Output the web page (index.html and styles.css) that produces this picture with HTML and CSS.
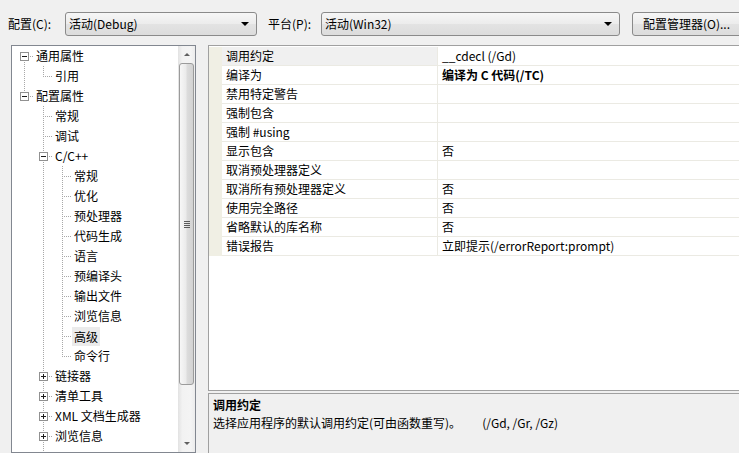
FILE: index.html
```html
<!DOCTYPE html>
<html lang="zh-CN">
<head>
<meta charset="utf-8">
<title>属性页</title>
<link rel="stylesheet" href="styles.css">
</head>
<body>
<div class="top">
  <span class="lbl lbl-cfg">配置(C):</span>
  <div class="combo combo-cfg"><span class="combo-text">活动(Debug)</span><span class="arrow"></span></div>
  <span class="lbl lbl-plat">平台(P):</span>
  <div class="combo combo-plat"><span class="combo-text">活动(Win32)</span><span class="arrow"></span></div>
  <div class="btn">配置管理器(O)...</div>
</div>
<div class="main">
  <div class="tree">
    <div class="tree-list">
      <div class="trow"><span class="col x-dn"><span class="box minus"></span></span><span class="tx">通用属性</span></div>
      <div class="trow"><span class="col v"></span><span class="col l"></span><span class="tx">引用</span></div>
      <div class="trow"><span class="col x-up"><span class="box minus"></span></span><span class="tx">配置属性</span></div>
      <div class="trow"><span class="col"></span><span class="col t"></span><span class="tx">常规</span></div>
      <div class="trow"><span class="col"></span><span class="col t"></span><span class="tx">调试</span></div>
      <div class="trow"><span class="col"></span><span class="col x-ud"><span class="box minus"></span></span><span class="tx">C/C++</span></div>
      <div class="trow"><span class="col"></span><span class="col v"></span><span class="col t"></span><span class="tx">常规</span></div>
      <div class="trow"><span class="col"></span><span class="col v"></span><span class="col t"></span><span class="tx">优化</span></div>
      <div class="trow"><span class="col"></span><span class="col v"></span><span class="col t"></span><span class="tx">预处理器</span></div>
      <div class="trow"><span class="col"></span><span class="col v"></span><span class="col t"></span><span class="tx">代码生成</span></div>
      <div class="trow"><span class="col"></span><span class="col v"></span><span class="col t"></span><span class="tx">语言</span></div>
      <div class="trow"><span class="col"></span><span class="col v"></span><span class="col t"></span><span class="tx">预编译头</span></div>
      <div class="trow"><span class="col"></span><span class="col v"></span><span class="col t"></span><span class="tx">输出文件</span></div>
      <div class="trow"><span class="col"></span><span class="col v"></span><span class="col t"></span><span class="tx">浏览信息</span></div>
      <div class="trow"><span class="col"></span><span class="col v"></span><span class="col t"></span><span class="tx sel">高级</span></div>
      <div class="trow"><span class="col"></span><span class="col v"></span><span class="col l"></span><span class="tx">命令行</span></div>
      <div class="trow"><span class="col"></span><span class="col x-ud"><span class="box plus"></span></span><span class="tx">链接器</span></div>
      <div class="trow"><span class="col"></span><span class="col x-ud"><span class="box plus"></span></span><span class="tx">清单工具</span></div>
      <div class="trow"><span class="col"></span><span class="col x-ud"><span class="box plus"></span></span><span class="tx">XML 文档生成器</span></div>
      <div class="trow"><span class="col"></span><span class="col x-ud"><span class="box plus"></span></span><span class="tx">浏览信息</span></div>
      <div class="trow"><span class="col"></span><span class="col v"></span></div>
    </div>
    <div class="vscroll">
      <div class="sb-btn"><span class="tri-up"></span></div>
      <div class="thumb"><span class="grip"></span></div>
      <div class="track"></div>
      <div class="sb-btn"><span class="tri-dn"></span></div>
    </div>
  </div>
  <div class="right">
    <div class="grid">
      <div class="grow"><span class="gut"></span><span class="name cur">调用约定</span><span class="val">__cdecl (/Gd)</span></div>
      <div class="grow"><span class="gut"></span><span class="name">编译为</span><span class="val bold">编译为 C 代码(/TC)</span></div>
      <div class="grow"><span class="gut"></span><span class="name">禁用特定警告</span><span class="val"></span></div>
      <div class="grow"><span class="gut"></span><span class="name">强制包含</span><span class="val"></span></div>
      <div class="grow"><span class="gut"></span><span class="name">强制 #using</span><span class="val"></span></div>
      <div class="grow"><span class="gut"></span><span class="name">显示包含</span><span class="val">否</span></div>
      <div class="grow"><span class="gut"></span><span class="name">取消预处理器定义</span><span class="val"></span></div>
      <div class="grow"><span class="gut"></span><span class="name">取消所有预处理器定义</span><span class="val">否</span></div>
      <div class="grow"><span class="gut"></span><span class="name">使用完全路径</span><span class="val">否</span></div>
      <div class="grow"><span class="gut"></span><span class="name">省略默认的库名称</span><span class="val">否</span></div>
      <div class="grow"><span class="gut"></span><span class="name">错误报告</span><span class="val">立即提示(/errorReport:prompt)</span></div>
    </div>
    <div class="desc">
      <div class="desc-title">调用约定</div>
      <div class="desc-text">选择应用程序的默认调用约定(可由函数重写)。<span class="desc-opt">(/Gd, /Gr, /Gz)</span></div>
    </div>
  </div>
</div>
</body>
</html>
```

FILE: styles.css
```css
html, body {
  margin: 0;
  padding: 0;
}
body {
  width: 739px;
  height: 453px;
  overflow: hidden;
  background: #f0f0f0;
  font-family: "Noto Sans CJK SC", "Microsoft YaHei", sans-serif;
  font-size: 12px;
  color: #000;
  --dv: repeating-linear-gradient(to bottom, #a8a8a8 0 1px, transparent 1px 2px);
  --dh: repeating-linear-gradient(to right, #a8a8a8 0 1px, transparent 1px 2px);
}

/* ---------- top bar ---------- */
.top {
  height: 45px;
  box-sizing: border-box;
  padding-top: 12px;
  display: flex;
  align-items: flex-start;
  white-space: nowrap;
}
.lbl {
  line-height: 24px;
  flex: none;
}
.lbl-cfg { margin-left: 8px; width: 57px; }
.lbl-plat { margin-left: 11px; width: 53px; }
.combo, .btn {
  height: 24px;
  box-sizing: border-box;
  border: 1px solid #8a8a8a;
  border-radius: 3px;
  background: linear-gradient(#f6f6f6, #ececec 50%, #e3e3e3 51%, #dcdcdc);
  flex: none;
  display: flex;
  align-items: center;
  line-height: 22px;
}
.combo-cfg { width: 192px; }
.combo-plat { width: 299px; }
.combo-text {
  flex: 1;
  padding-left: 3px;
}
.arrow {
  width: 0;
  height: 0;
  border-left: 4px solid transparent;
  border-right: 4px solid transparent;
  border-top: 4px solid #000;
  margin-right: 7px;
}
.btn {
  margin-left: 12px;
  width: 112px;
  padding-left: 10px;
}

/* ---------- main ---------- */
.main {
  display: flex;
  padding-left: 11px;
  gap: 12px;
}

/* tree */
.tree {
  width: 185px;
  height: 408px;
  box-sizing: border-box;
  border: 1px solid #828790;
  background: #fff;
  display: flex;
  flex: none;
}
.tree-list {
  flex: 1;
  overflow: hidden;
  padding-left: 3px;
}
.trow {
  height: 20px;
  display: flex;
  align-items: center;
  white-space: nowrap;
}
.col {
  width: 19px;
  height: 20px;
  flex: none;
  display: flex;
  align-items: center;
  background-repeat: no-repeat;
}
.v {
  background-image: var(--dv);
  background-size: 1px 20px;
  background-position: 9px 0;
}
.t {
  background-image: var(--dv), var(--dh);
  background-size: 1px 20px, 8px 1px;
  background-position: 9px 0, 11px 10px;
}
.l {
  background-image: var(--dv), var(--dh);
  background-size: 1px 11px, 8px 1px;
  background-position: 9px 0, 11px 10px;
}
.x-dn {
  background-image: var(--dv), var(--dh);
  background-size: 1px 10px, 5px 1px;
  background-position: 9px 10px, 15px 10px;
}
.x-up {
  background-image: var(--dv), var(--dh);
  background-size: 1px 10px, 5px 1px;
  background-position: 9px 0, 15px 10px;
}
.x-ud {
  background-image: var(--dv), var(--dh);
  background-size: 1px 20px, 5px 1px;
  background-position: 9px 0, 15px 10px;
}
.box {
  width: 9px;
  height: 9px;
  box-sizing: border-box;
  border: 1px solid #919191;
  margin-left: 5px;
  margin-top: 1px;
}
.box.minus {
  background: linear-gradient(#1c1c1c, #1c1c1c) center / 5px 1px no-repeat, #fff;
}
.box.plus {
  background: linear-gradient(#1c1c1c, #1c1c1c) center / 5px 1px no-repeat,
              linear-gradient(#1c1c1c, #1c1c1c) center / 1px 5px no-repeat, #fff;
}
.tx {
  padding-left: 2px;
  line-height: 20px;
}
.tx.sel {
  padding: 0 2px;
  line-height: 19px;
  background: #ebebeb;
}

/* scrollbar */
.vscroll {
  width: 17px;
  flex: none;
  display: flex;
  flex-direction: column;
  background: linear-gradient(to right, #e2e2e2, #f2f2f2 25%, #f4f4f4 75%, #ececec);
}
.sb-btn {
  height: 17px;
  flex: none;
  display: flex;
  align-items: center;
  justify-content: center;
}
.tri-up, .tri-dn {
  width: 0;
  height: 0;
  border-left: 3px solid transparent;
  border-right: 3px solid transparent;
}
.tri-up { border-bottom: 3px solid #606060; }
.tri-dn { border-top: 3px solid #606060; }
.thumb {
  height: 322px;
  margin: 0 1px;
  box-sizing: border-box;
  border: 1px solid #9b9b9b;
  border-radius: 3px;
  background: linear-gradient(to right, #f7f7f7, #ebebeb 45%, #dcdcdc 55%, #d2d2d2);
  display: flex;
  align-items: center;
  justify-content: center;
  flex: none;
}
.grip {
  width: 6px;
  height: 7px;
  background: repeating-linear-gradient(to bottom, #5a5a5a 0 1px, transparent 1px 2px);
}
.track { flex: 1; }

/* right side */
.right {
  width: 540px;
  flex: none;
  display: flex;
  flex-direction: column;
  gap: 2px;
}
.grid {
  height: 346px;
  box-sizing: border-box;
  border: 1px solid #a0a0a0;
  background: #fff;
  padding-top: 1px;
}
.grow {
  display: grid;
  grid-template-columns: 13px 216px 1fr;
  height: 19px;
  white-space: nowrap;
}
.gut {
  background: #f0efe4;
}
.name, .val {
  box-sizing: border-box;
  border-bottom: 1px solid #ebeae3;
  line-height: 18px;
  padding-left: 4px;
  overflow: hidden;
}
.name {
  border-right: 1px solid #ebeae3;
}
.name.cur {
  background: #f0f0f0;
}
.bold { font-weight: bold; }

.desc {
  height: 61px;
  box-sizing: border-box;
  border: 1px solid #a0a0a0;
  background: #f0f0f0;
  padding: 2px 4px 0;
  line-height: 18px;
  white-space: nowrap;
}
.desc-title { font-weight: bold; }
.desc-opt { padding-left: 21px; }
```
